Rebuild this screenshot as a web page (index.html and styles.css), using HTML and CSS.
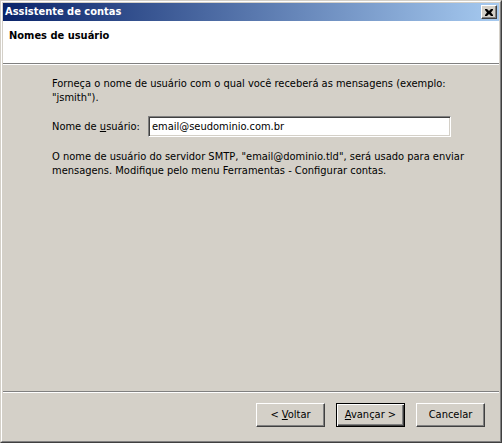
FILE: index.html
```html
<!DOCTYPE html>
<html lang="pt-BR">
<head>
<meta charset="utf-8">
<title>Assistente de contas</title>
<link rel="stylesheet" href="styles.css">
</head>
<body>
<div class="window">
  <div class="frame">
    <div class="titlebar">
      <span class="title">Assistente de contas</span>
      <span class="close" aria-label="Fechar">
        <svg width="8" height="7" viewBox="0 0 8 7" aria-hidden="true">
          <path d="M0 0h2l2 2 2-2h2v1l-2 2.5 2 2.5v1h-2l-2-2-2 2h-2v-1l2-2.5-2-2.5z" fill="#000"/>
        </svg>
      </span>
    </div>
    <div class="header">
      <h1 class="header-title">Nomes de usuário</h1>
    </div>
    <div class="content">
      <p class="text">Forneça o nome de usuário com o qual você receberá as mensagens (exemplo: "jsmith").</p>
      <div class="field">
        <label class="field-label" for="user">Nome de <u>u</u>suário:</label>
        <div class="input"><span id="user">email@seudominio.com.br</span></div>
      </div>
      <p class="text text-smtp">O nome de usuário do servidor SMTP, "email@dominio.tld", será usado para enviar mensagens. Modifique pelo menu Ferramentas - Configurar contas.</p>
    </div>
    <div class="footer">
      <button class="btn">&lt; <u>V</u>oltar</button>
      <button class="btn btn-default"><u>A</u>vançar &gt;</button>
      <button class="btn">Cancelar</button>
    </div>
  </div>
</div>
</body>
</html>
```
FILE: styles.css
```css
* { box-sizing: border-box; }
html, body {
  margin: 0;
  padding: 0;
  background: #d4d0c8;
}
body {
  font-family: "DejaVu Sans Condensed", "DejaVu Sans", sans-serif;
  font-stretch: condensed;
  font-size: 11px;
  line-height: 14px;
  color: #000;
}
.window {
  width: 502px;
  height: 443px;
  border: 1px solid;
  border-color: #d4d0c8 #404040 #404040 #d4d0c8;
  background: #d4d0c8;
}
.frame {
  height: 100%;
  border: 1px solid;
  border-color: #ffffff #808080 #808080 #ffffff;
  padding: 1px;
  display: flex;
  flex-direction: column;
}
.titlebar {
  height: 18px;
  flex: none;
  display: flex;
  align-items: center;
  justify-content: space-between;
  padding: 0 2px 0 2px;
  background: linear-gradient(to right, #0a246a, #a6caf0);
}
.title {
  color: #fff;
  font-weight: bold;
}
.close {
  width: 16px;
  height: 14px;
  display: flex;
  align-items: center;
  justify-content: center;
  background: #d4d0c8;
  border: 1px solid;
  border-color: #ffffff #404040 #404040 #ffffff;
  box-shadow: inset -1px -1px 0 #808080;
}
.header {
  height: 43px;
  flex: none;
  background: #fff;
  padding: 8px 6px 0;
  border-bottom: 1px solid #808080;
  box-shadow: 0 1px 0 #fff;
}
.header-title {
  margin: 0;
  font-size: 11px;
  font-weight: bold;
}
.content {
  flex: 1;
  padding: 13px 0 0 49px;
}
.text {
  margin: 0;
  width: 430px;
}
.field {
  display: flex;
  align-items: center;
  margin-top: 11px;
}
.field-label {
  width: 96px;
}
.input {
  width: 303px;
  height: 21px;
  background: #fff;
  border: 1px solid;
  border-color: #808080 #ffffff #ffffff #808080;
  box-shadow: inset 1px 1px 0 #404040, inset -1px -1px 0 #d4d0c8;
  padding: 2px 3px;
  line-height: 15px;
}
.text-smtp {
  margin-top: 13px;
}
.footer {
  flex: none;
  height: 49px;
  display: flex;
  justify-content: flex-end;
  gap: 11px;
  padding: 10px 14px 0 0;
  border-top: 1px solid #808080;
  box-shadow: inset 0 1px 0 #fff;
}
.btn {
  width: 69px;
  height: 24px;
  margin-top: 1px;
  font: inherit;
  font-stretch: condensed;
  color: #000;
  background: #d4d0c8;
  border: 1px solid;
  border-color: #ffffff #404040 #404040 #ffffff;
  box-shadow: inset -1px -1px 0 #808080;
  padding: 0;
}
.btn-default {
  border: 1px solid #000;
  box-shadow: inset 1px 1px 0 #fff, inset -1px -1px 0 #404040, inset -2px -2px 0 #808080;
}
```
